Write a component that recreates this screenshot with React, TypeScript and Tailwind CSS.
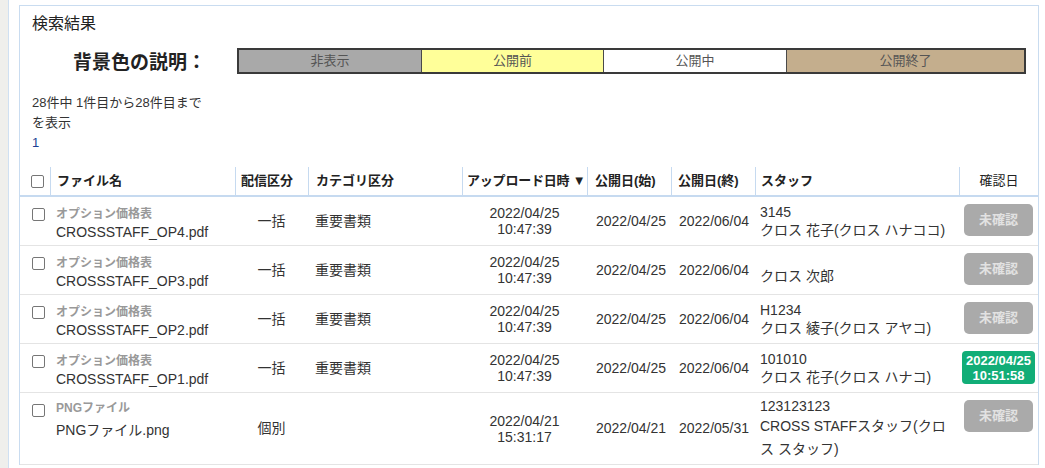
import React from "react";

interface FileRow {
  id: number;
  sub: string;
  name: string;
  kind: string;
  category: string;
  uploaded: [string, string];
  start: string;
  end: string;
  code: string;
  staff: string;
  confirmed?: [string, string];
  tall?: boolean;
}

const ROWS: FileRow[] = [
  {
    id: 4,
    sub: "オプション価格表",
    name: "CROSSSTAFF_OP4.pdf",
    kind: "一括",
    category: "重要書類",
    uploaded: ["2022/04/25", "10:47:39"],
    start: "2022/04/25",
    end: "2022/06/04",
    code: "3145",
    staff: "クロス 花子(クロス ハナココ)",
  },
  {
    id: 3,
    sub: "オプション価格表",
    name: "CROSSSTAFF_OP3.pdf",
    kind: "一括",
    category: "重要書類",
    uploaded: ["2022/04/25", "10:47:39"],
    start: "2022/04/25",
    end: "2022/06/04",
    code: "",
    staff: "クロス 次郎",
  },
  {
    id: 2,
    sub: "オプション価格表",
    name: "CROSSSTAFF_OP2.pdf",
    kind: "一括",
    category: "重要書類",
    uploaded: ["2022/04/25", "10:47:39"],
    start: "2022/04/25",
    end: "2022/06/04",
    code: "H1234",
    staff: "クロス 綾子(クロス アヤコ)",
  },
  {
    id: 1,
    sub: "オプション価格表",
    name: "CROSSSTAFF_OP1.pdf",
    kind: "一括",
    category: "重要書類",
    uploaded: ["2022/04/25", "10:47:39"],
    start: "2022/04/25",
    end: "2022/06/04",
    code: "101010",
    staff: "クロス 花子(クロス ハナコ)",
    confirmed: ["2022/04/25", "10:51:58"],
  },
  {
    id: 5,
    sub: "PNGファイル",
    name: "PNGファイル.png",
    kind: "個別",
    category: "",
    uploaded: ["2022/04/21", "15:31:17"],
    start: "2022/04/21",
    end: "2022/05/31",
    code: "123123123",
    staff: "CROSS STAFFスタッフ(クロス スタッフ)",
    tall: true,
  },
];

const LEGEND = [
  { label: "非表示", className: "w-[183px] border-r border-[#4a4a4a] bg-[#a9a9a9]" },
  { label: "公開前", className: "w-[182px] border-r border-[#4a4a4a] bg-[#ffff99]" },
  { label: "公開中", className: "w-[183px] border-r border-[#4a4a4a] bg-white" },
  { label: "公開終了", className: "flex-1 bg-[#c4ae8d]" },
];

const GRID_COLS =
  "grid grid-cols-[30px_185px_73px_154px_125px_84px_84px_204px_79px]";

function CheckBox(): React.ReactElement {
  return (
    <span className="block h-[13px] w-[13px] rounded-[2px] border border-[#767676] bg-white" />
  );
}

function HeaderCell({
  children,
  className = "",
}: {
  children: React.ReactNode;
  className?: string;
}): React.ReactElement {
  return (
    <div
      className={`flex items-center whitespace-nowrap border-l border-[#c6daf0] text-[13px] font-bold text-[#222] ${className}`}
    >
      {children}
    </div>
  );
}

function DataRow({ row }: { row: FileRow }): React.ReactElement {
  return (
    <div
      className={`${GRID_COLS} border-b border-[#e4e4e4] text-[14px] text-[#333] ${
        row.tall ? "h-[72px]" : "h-[49px]"
      }`}
    >
      <div className="pl-[12px] pt-[11px]">
        <CheckBox />
      </div>
      <div className={`flex flex-col pl-[6px] ${row.tall ? "pt-[7px]" : "pt-[9px]"}`}>
        <span className="text-[12px] font-bold leading-[16px] text-[#999]">{row.sub}</span>
        <span className={row.tall ? "leading-[28px]" : "leading-[20px]"}>{row.name}</span>
      </div>
      <div className="flex items-center justify-center">{row.kind}</div>
      <div className="flex items-center pl-[7px]">{row.category}</div>
      <div className="flex flex-col items-center justify-center leading-[16px]">
        <span>{row.uploaded[0]}</span>
        <span>{row.uploaded[1]}</span>
      </div>
      <div className="flex items-center pl-[9px]">{row.start}</div>
      <div className="flex items-center pl-[8px]">{row.end}</div>
      <div className="flex flex-col justify-center pl-[5px] pr-[6px]">
        {row.code ? (
          <span className="leading-[18px]">{row.code}</span>
        ) : (
          <span className="h-[12px]" />
        )}
        <span className={row.tall ? "leading-[23px]" : "leading-[19px]"}>{row.staff}</span>
      </div>
      <div className="flex justify-center pt-[7px]">
        {row.confirmed ? (
          <div className="flex h-[33px] w-[73px] flex-col items-center justify-center rounded-[4px] bg-[#11ad77] text-[13px] font-bold leading-[15px] text-white">
            <span>{row.confirmed[0]}</span>
            <span>{row.confirmed[1]}</span>
          </div>
        ) : (
          <div className="flex h-[32px] w-[69px] items-center justify-center rounded-[5px] bg-[#aaaaaa] text-[13px] font-bold text-[#e2e2e2]">
            未確認
          </div>
        )}
      </div>
    </div>
  );
}

export default function App(): React.ReactElement {
  return (
    <div className="flex min-h-screen bg-white font-['Liberation_Sans','Noto_Sans_CJK_JP',sans-serif] text-[#333]">
      <div className="w-[8px] shrink-0 bg-[#efefec]" />
      <div className="flex-1 border-l border-[#cfe0f2] pl-[10px] pr-[6px] pt-[5px]">
        <section className="border-x border-t border-[#c9dcf0]">
          <h2 className="pl-[12px] pt-[8px] text-[16px] leading-[20px] text-[#222]">検索結果</h2>

          <div className="mt-[13px] flex items-center">
            <div className="w-[217px] pl-[53px] pt-[4px] text-[19px] font-bold leading-[24px] text-[#222]">
              背景色の説明：
            </div>
            <div className="flex h-[26px] w-[789px] border-2 border-[#3a3a3a] text-[13px] text-[#555]">
              {LEGEND.map((item) => (
                <div
                  key={item.label}
                  className={`flex items-center justify-center leading-[22px] ${item.className}`}
                >
                  {item.label}
                </div>
              ))}
            </div>
          </div>

          <div className="mt-[18px] pl-[12px] text-[13px]">
            <p className="w-[178px] leading-[20px]">28件中 1件目から28件目までを表示</p>
            <p className="leading-[19px] text-[#1c3f94]">1</p>
          </div>

          <div className="mt-[15px]">
            <div className={`${GRID_COLS} h-[30px] border-b-2 border-[#c6daf0]`}>
              <div className="flex items-center pl-[11px]">
                <CheckBox />
              </div>
              <HeaderCell className="pl-[6px]">ファイル名</HeaderCell>
              <HeaderCell className="pl-[5px]">配信区分</HeaderCell>
              <HeaderCell className="pl-[7px]">カテゴリ区分</HeaderCell>
              <HeaderCell className="pl-[4px] tracking-[-0.2px]">アップロード日時 ▼</HeaderCell>
              <HeaderCell className="pl-[7px]">公開日(始)</HeaderCell>
              <HeaderCell className="pl-[6px]">公開日(終)</HeaderCell>
              <HeaderCell className="pl-[5px]">スタッフ</HeaderCell>
              <HeaderCell className="justify-center font-normal">確認日</HeaderCell>
            </div>
            {ROWS.map((row) => (
              <DataRow key={row.id} row={row} />
            ))}
          </div>
        </section>
      </div>
    </div>
  );
}
